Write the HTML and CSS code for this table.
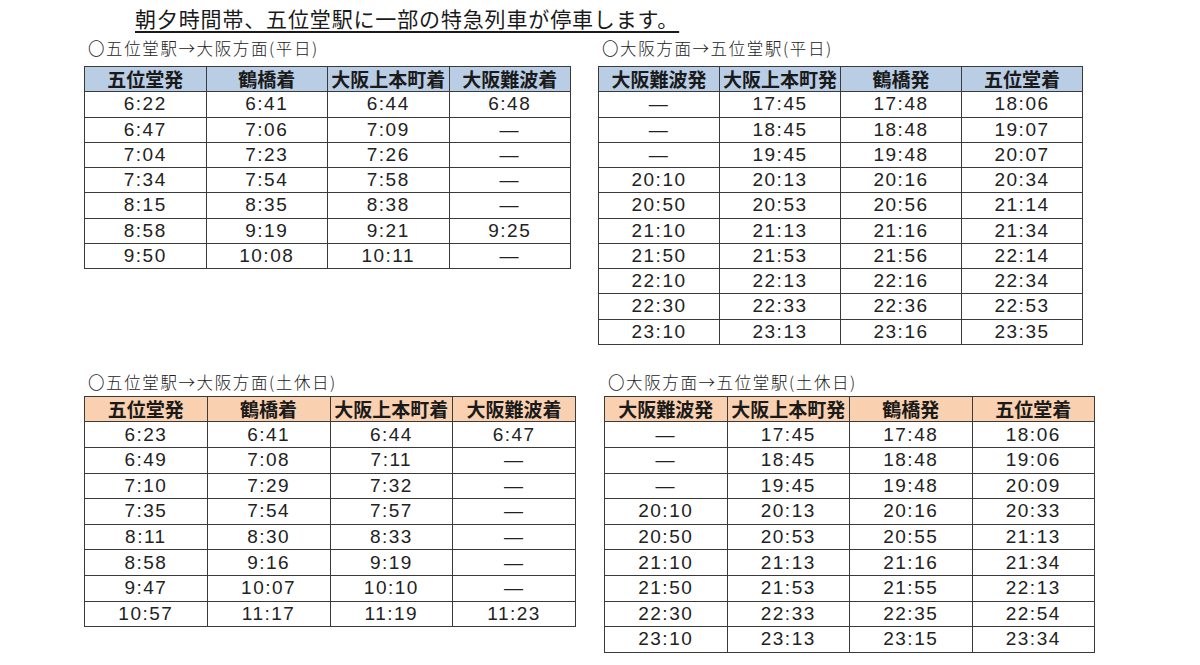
FILE: index.html
```html
<!DOCTYPE html>
<html lang="ja">
<head>
<meta charset="utf-8">
<title>特急停車時刻表</title>
<link rel="stylesheet" href="styles.css">
</head>
<body>
<div class="page">
  <h1 class="title">朝夕時間帯、五位堂駅に一部の特急列車が停車します。</h1>

  <div class="row row-top">
    <section class="block w-tl">
      <p class="caption">〇五位堂駅→大阪方面(平日)</p>
      <table class="tt blue">
        <tr><th>五位堂発</th><th>鶴橋着</th><th>大阪上本町着</th><th>大阪難波着</th></tr>
        <tr><td>6:22</td><td>6:41</td><td>6:44</td><td>6:48</td></tr>
        <tr><td>6:47</td><td>7:06</td><td>7:09</td><td>—</td></tr>
        <tr><td>7:04</td><td>7:23</td><td>7:26</td><td>—</td></tr>
        <tr><td>7:34</td><td>7:54</td><td>7:58</td><td>—</td></tr>
        <tr><td>8:15</td><td>8:35</td><td>8:38</td><td>—</td></tr>
        <tr><td>8:58</td><td>9:19</td><td>9:21</td><td>9:25</td></tr>
        <tr><td>9:50</td><td>10:08</td><td>10:11</td><td>—</td></tr>
      </table>
    </section>
    <section class="block w-tr">
      <p class="caption">〇大阪方面→五位堂駅(平日)</p>
      <table class="tt blue">
        <tr><th>大阪難波発</th><th>大阪上本町発</th><th>鶴橋発</th><th>五位堂着</th></tr>
        <tr><td>—</td><td>17:45</td><td>17:48</td><td>18:06</td></tr>
        <tr><td>—</td><td>18:45</td><td>18:48</td><td>19:07</td></tr>
        <tr><td>—</td><td>19:45</td><td>19:48</td><td>20:07</td></tr>
        <tr><td>20:10</td><td>20:13</td><td>20:16</td><td>20:34</td></tr>
        <tr><td>20:50</td><td>20:53</td><td>20:56</td><td>21:14</td></tr>
        <tr><td>21:10</td><td>21:13</td><td>21:16</td><td>21:34</td></tr>
        <tr><td>21:50</td><td>21:53</td><td>21:56</td><td>22:14</td></tr>
        <tr><td>22:10</td><td>22:13</td><td>22:16</td><td>22:34</td></tr>
        <tr><td>22:30</td><td>22:33</td><td>22:36</td><td>22:53</td></tr>
        <tr><td>23:10</td><td>23:13</td><td>23:16</td><td>23:35</td></tr>
      </table>
    </section>
  </div>

  <div class="row row-bottom">
    <section class="block w-bl">
      <p class="caption">〇五位堂駅→大阪方面(土休日)</p>
      <table class="tt orange tall">
        <tr><th>五位堂発</th><th>鶴橋着</th><th>大阪上本町着</th><th>大阪難波着</th></tr>
        <tr><td>6:23</td><td>6:41</td><td>6:44</td><td>6:47</td></tr>
        <tr><td>6:49</td><td>7:08</td><td>7:11</td><td>—</td></tr>
        <tr><td>7:10</td><td>7:29</td><td>7:32</td><td>—</td></tr>
        <tr><td>7:35</td><td>7:54</td><td>7:57</td><td>—</td></tr>
        <tr><td>8:11</td><td>8:30</td><td>8:33</td><td>—</td></tr>
        <tr><td>8:58</td><td>9:16</td><td>9:19</td><td>—</td></tr>
        <tr><td>9:47</td><td>10:07</td><td>10:10</td><td>—</td></tr>
        <tr><td>10:57</td><td>11:17</td><td>11:19</td><td>11:23</td></tr>
      </table>
    </section>
    <section class="block w-br">
      <p class="caption">〇大阪方面→五位堂駅(土休日)</p>
      <table class="tt orange tall">
        <tr><th>大阪難波発</th><th>大阪上本町発</th><th>鶴橋発</th><th>五位堂着</th></tr>
        <tr><td>—</td><td>17:45</td><td>17:48</td><td>18:06</td></tr>
        <tr><td>—</td><td>18:45</td><td>18:48</td><td>19:06</td></tr>
        <tr><td>—</td><td>19:45</td><td>19:48</td><td>20:09</td></tr>
        <tr><td>20:10</td><td>20:13</td><td>20:16</td><td>20:33</td></tr>
        <tr><td>20:50</td><td>20:53</td><td>20:55</td><td>21:13</td></tr>
        <tr><td>21:10</td><td>21:13</td><td>21:16</td><td>21:34</td></tr>
        <tr><td>21:50</td><td>21:53</td><td>21:55</td><td>22:13</td></tr>
        <tr><td>22:30</td><td>22:33</td><td>22:35</td><td>22:54</td></tr>
        <tr><td>23:10</td><td>23:13</td><td>23:15</td><td>23:34</td></tr>
      </table>
    </section>
  </div>
</div>
</body>
</html>
```

FILE: styles.css
```css
* { box-sizing: border-box; }

html, body {
  margin: 0;
  padding: 0;
  background: #ffffff;
}

body {
  font-family: "Noto Sans CJK JP", "Noto Sans", sans-serif;
  color: #1e1e1e;
  width: 1200px;
  height: 665px;
  overflow: hidden;
}

.page {
  padding-left: 84px;
}

.title {
  margin: 0 0 0 51px;
  height: 36px;
  line-height: 36px;
  font-size: 21px;
  font-weight: 400;
  letter-spacing: 0.85px;
  color: #1a1a1a;
  text-decoration: underline;
  text-decoration-thickness: 2px;
  text-underline-offset: 4px;
  white-space: nowrap;
}

.row {
  display: flex;
  align-items: flex-start;
}

.row-top { gap: 27px; }
.row-bottom { gap: 28px; margin-top: 25px; }

.block { flex: none; }
.w-tl { width: 487px; }
.w-tr { width: 485px; }
.w-bl { width: 492px; }
.w-br { width: 491px; }

.caption {
  margin: 0;
  padding-left: 4px;
  height: 24px;
  line-height: 24px;
  font-size: 16.5px;
  font-weight: 300;
  letter-spacing: 1.6px;
  color: #222;
  white-space: nowrap;
}

.row-top .caption { margin-bottom: 6px; }
.row-bottom .caption { margin-bottom: 2px; }

.tt {
  width: 100%;
  table-layout: fixed;
  border-collapse: collapse;
  border: 1px solid #3a3a3a;
}

.tt tr { height: 25.25px; }
.tt.tall tr { height: 25.6px; }

.tt th,
.tt td {
  border: 1px solid #3a3a3a;
  padding: 0;
  text-align: center;
  vertical-align: middle;
  white-space: nowrap;
  overflow: hidden;
}

.tt th {
  font-family: "Noto Sans CJK JP", sans-serif;
  font-size: 19px;
  font-weight: 700;
  line-height: 22px;
  color: #1a1a1a;
}

.tt td {
  font-family: "Liberation Sans", Arial, sans-serif;
  font-size: 19px;
  letter-spacing: 1.5px;
  line-height: 22px;
  color: #222;
}

.blue th { background: #b9cde5; }
.orange th { background: #f9d0b0; }
```
